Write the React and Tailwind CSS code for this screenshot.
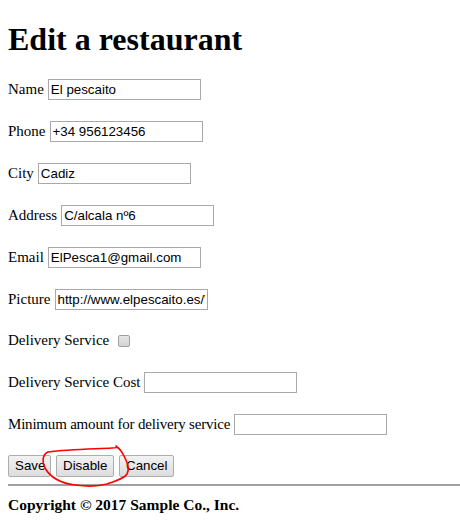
import React from "react";

const fields = [
  { label: "Name", value: "El pescaito" },
  { label: "Phone", value: "+34 956123456" },
  { label: "City", value: "Cadiz" },
  { label: "Address", value: "C/alcala nº6" },
  { label: "Email", value: "ElPesca1@gmail.com" },
  { label: "Picture", value: "http://www.elpescaito.es/\\" },
];

const inputCls =
  "w-[153px] h-[21px] border border-[#a9a9a9] bg-white px-[2px] text-[13.33px] text-black outline-none [font-family:'Liberation_Sans',Arial,sans-serif]";

const btnCls =
  "h-[22px] px-[6px] border border-[#adadad] rounded-[2px] bg-gradient-to-b from-[#f2f2f2] to-[#dddddd] text-[13.33px] text-black [font-family:'Liberation_Sans',Arial,sans-serif]";

const App = () => {
  return (
    <div className="relative w-[460px] h-[528px] overflow-hidden bg-white text-black px-2 [font-family:'Liberation_Serif','Times_New_Roman',serif]">
      <h1 className="pt-[21px] h-[56px] text-[32px] font-bold leading-[37px]">
        Edit a restaurant
      </h1>
      <form className="mt-[22px]" onSubmit={(e) => e.preventDefault()}>
        {fields.map((f) => (
          <div key={f.label} className="flex items-baseline gap-[4px] h-[21px] mb-[21px] text-[15px]">
            <span>{f.label}</span>
            <input className={inputCls} defaultValue={f.value} type="text" />
          </div>
        ))}
        <div className="flex items-center gap-[9px] h-[21px] mb-[20px] text-[15px]">
          <span>Delivery Service</span>
          <span className="block w-[12px] h-[12px] rounded-[2px] border border-[#a0a0a0] bg-gradient-to-b from-[#e6e6e6] to-[#d4d4d4]"></span>
        </div>
        <div className="flex items-baseline gap-[4px] h-[21px] mb-[21px] text-[15px]">
          <span>Delivery Service Cost</span>
          <input className={inputCls} type="text" />
        </div>
        <div className="flex items-baseline gap-[4px] h-[21px] mb-[21px] text-[15px]">
          <span className="tracking-[-0.2px]">Minimum amount for delivery service</span>
          <input className={inputCls} type="text" />
        </div>
        <div className="flex gap-[5px]">
          <button className={`${btnCls} w-[43px]`}>Save</button>
          <button className={`${btnCls} w-[58px]`}>Disable</button>
          <button className={`${btnCls} w-[55px]`}>Cancel</button>
        </div>
      </form>
      <div className="mt-[7px] -mr-2 border-t-2 border-[#a0a0a0]"></div>
      <p className="mt-[7px] text-[15.5px] font-bold">Copyright © 2017 Sample Co., Inc.</p>

      {/* hand-drawn red mark around Disable */}
      <svg className="absolute left-0 top-0 pointer-events-none" width="460" height="528">
        <path
          d="M116 446 C 118 447 117 448 112 448 C 95 449 70 449 48 452 C 42 455 42 462 45 468 C 50 477 60 483 75 485 C 90 487 100 486 107 484 C 115 481 124 479 127 474 C 130 468 127 462 124 456 C 122 452 120 449 117 447"
          fill="none"
          stroke="#ff0000"
          strokeWidth="1.6"
          strokeLinecap="round"
        />
      </svg>
    </div>
  );
};

export default App;
